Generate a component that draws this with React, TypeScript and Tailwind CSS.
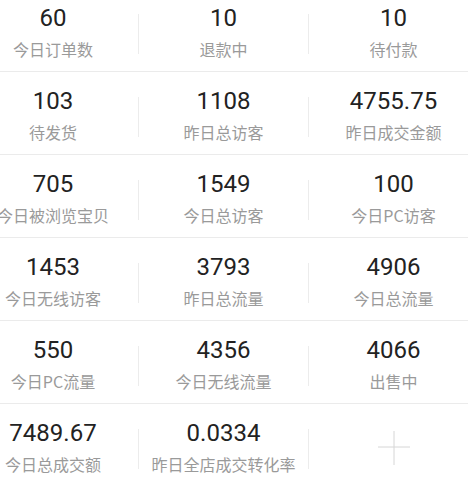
const rows: { value: string; label: string }[][] = [
  [
    { value: "60", label: "今日订单数" },
    { value: "10", label: "退款中" },
    { value: "10", label: "待付款" },
  ],
  [
    { value: "103", label: "待发货" },
    { value: "1108", label: "昨日总访客" },
    { value: "4755.75", label: "昨日成交金额" },
  ],
  [
    { value: "705", label: "今日被浏览宝贝" },
    { value: "1549", label: "今日总访客" },
    { value: "100", label: "今日PC访客" },
  ],
  [
    { value: "1453", label: "今日无线访客" },
    { value: "3793", label: "昨日总流量" },
    { value: "4906", label: "今日总流量" },
  ],
  [
    { value: "550", label: "今日PC流量" },
    { value: "4356", label: "今日无线流量" },
    { value: "4066", label: "出售中" },
  ],
  [
    { value: "7489.67", label: "今日总成交额" },
    { value: "0.0334", label: "昨日全店成交转化率" },
  ],
];

function Stat({ value, label }: { value: string; label: string }) {
  return (
    <div className="flex flex-1 flex-col items-center pt-[15px]">
      <span className="text-[24px] leading-[28px] text-[#222]">{value}</span>
      <span className="mt-[6px] whitespace-nowrap text-[16px] leading-[22px] text-[#9a9a9a] [font-family:'Noto_Sans_CJK_SC',sans-serif]">
        {label}
      </span>
    </div>
  );
}

function AddCell() {
  return (
    <div className="flex flex-1 items-start justify-center pt-[27px]">
      <svg width="34" height="34" viewBox="0 0 34 34">
        <line x1="1" y1="16" x2="33" y2="16" stroke="#d6d6d6" strokeWidth="1" />
        <line x1="17" y1="0" x2="17" y2="34" stroke="#d6d6d6" strokeWidth="1" />
      </svg>
    </div>
  );
}

export default function App() {
  return (
    <div className="h-[493px] w-[468px] overflow-hidden bg-white [font-family:Roboto,'Noto_Sans_CJK_SC',sans-serif]">
      <div className="-ml-[32px] -mt-[11px] w-[510px]">
        {rows.map((row, i) => (
          <div
            key={i}
            className={`flex h-[83px] ${i < rows.length - 1 ? "border-b border-[#ebebeb]" : ""}`}
          >
            {[0, 1, 2].map((c) => (
              <div key={c} className="flex w-[170px]">
                {c > 0 && <div className="mt-[25px] h-[40px] w-px bg-[#ececec]" />}
                {row[c] ? <Stat value={row[c].value} label={row[c].label} /> : <AddCell />}
              </div>
            ))}
          </div>
        ))}
      </div>
    </div>
  );
}
